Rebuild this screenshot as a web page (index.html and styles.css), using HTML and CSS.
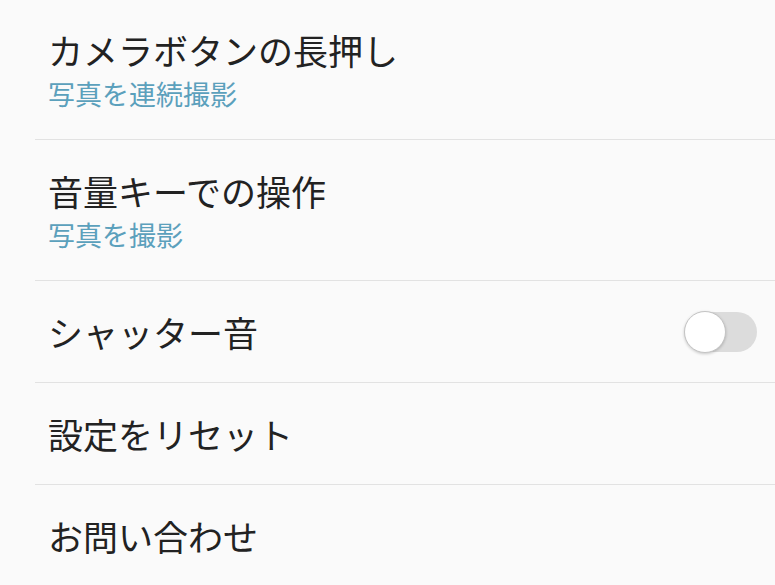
FILE: index.html
```html
<!DOCTYPE html>
<html lang="ja">
<head>
  <meta charset="UTF-8" />
  <meta name="viewport" content="width=device-width, initial-scale=1.0"/>
  <title>設定</title>
  <link rel="stylesheet" href="styles.css">
</head>
<body>

  <div class="settings">
    <!-- 2行の項目 -->
    <div class="item item-double">
      <div class="title">カメラボタンの長押し</div>
      <div class="summary">写真を連続撮影</div>
    </div>

    <div class="item item-double">
      <div class="title">音量キーでの操作</div>
      <div class="summary">写真を撮影</div>
    </div>

    <!-- スイッチ付き -->
    <div class="item item-single">
      <div class="title">シャッター音</div>
      <div class="switch">
        <span class="switch-thumb"></span>
      </div>
    </div>

    <div class="item item-single">
      <div class="title">設定をリセット</div>
    </div>

    <div class="item item-single item-last">
      <div class="title">お問い合わせ</div>
    </div>
  </div>

</body>
</html>
```

FILE: styles.css
```css
body {
  font-family: "Noto Sans CJK JP", "Noto Sans", sans-serif;
  background-color: #fafafa;
  margin: 0;
  overflow: hidden;
}

.settings {
  margin-left: 35px;
  margin-top: -1px;
}

.item {
  display: flex;
  border-bottom: 1px solid #e2e2e2;
  padding: 0 18px 0 13px;
}

.item-double {
  flex-direction: column;
  box-sizing: border-box;
  height: 141px;
  padding-top: 29px;
}

.item-single {
  align-items: center;
  justify-content: space-between;
  height: 101px;
}

.item-last {
  border-bottom: none;
}

.title {
  font-size: 35px;
  line-height: 44px;
  color: #222;
}

.summary {
  font-size: 27px;
  line-height: 44px;
  color: #5ba0bc;
}

.switch {
  position: relative;
  width: 71px;
  height: 40px;
  border-radius: 20px;
  background-color: #dcdcdc;
}

.switch-thumb {
  position: absolute;
  left: -2px;
  top: -1px;
  width: 40px;
  height: 40px;
  border-radius: 50%;
  background-color: #fff;
  border: 1px solid #c4c4c4;
  box-shadow: 0 1px 3px rgba(0,0,0,0.2);
}
```
